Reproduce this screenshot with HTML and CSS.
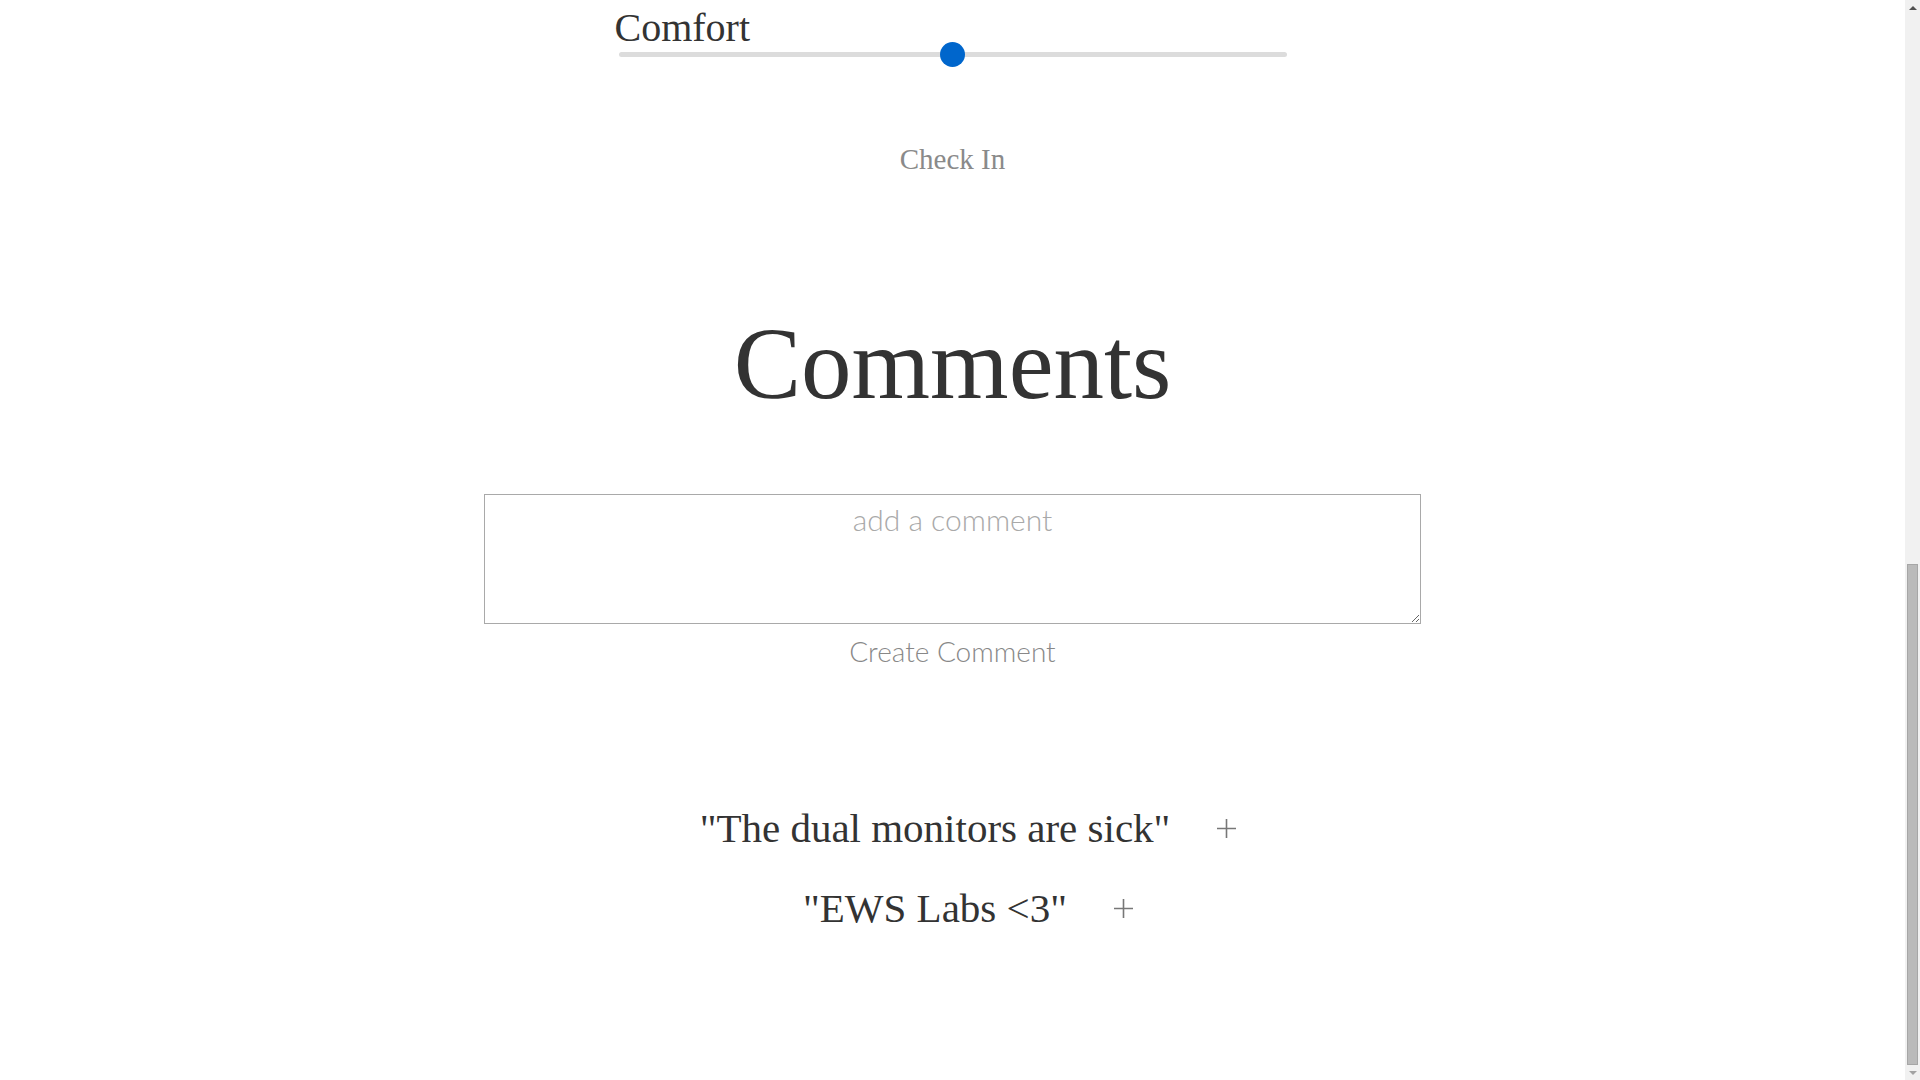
FILE: index.html
```html
<!DOCTYPE html>
<html lang="en">
<head>
<meta charset="utf-8">
<title>Check In</title>
<link rel="stylesheet" href="styles.css">
</head>
<body>
<main class="page">
  <section class="rating">
    <div class="field">
      <label class="field-label" for="comfort">Comfort</label>
      <input class="range" type="range" id="comfort" min="0" max="100" value="50">
    </div>
    <button class="check-in" type="button">Check In</button>
  </section>
  <section class="comments">
    <h1 class="comments-title">Comments</h1>
    <form class="comment-form">
      <textarea class="comment-input" placeholder="add a comment"></textarea>
      <button class="create-button" type="button">Create Comment</button>
    </form>
    <ul class="comment-list">
      <li class="comment">
        <span class="comment-text">"The dual monitors are sick"</span>
        <button class="plus-button" type="button" aria-label="upvote">
          <svg viewBox="0 0 19 19" width="19" height="19"><path d="M9.5 0V19M0 9.5H19" stroke="#777" stroke-width="1.6" fill="none"/></svg>
        </button>
      </li>
      <li class="comment">
        <span class="comment-text">"EWS Labs &lt;3"</span>
        <button class="plus-button" type="button" aria-label="upvote">
          <svg viewBox="0 0 19 19" width="19" height="19"><path d="M9.5 0V19M0 9.5H19" stroke="#777" stroke-width="1.6" fill="none"/></svg>
        </button>
      </li>
    </ul>
  </section>
</main>
<div class="scrollbar" aria-hidden="true">
  <span class="sb-arrow"><span class="sb-up"></span></span>
  <div class="sb-track"><div class="sb-thumb"></div></div>
  <span class="sb-arrow"><span class="sb-down"></span></span>
</div>
</body>
</html>
```
FILE: styles.css
```css
html, body {
  height: 100%;
}

body {
  margin: 0;
  display: flex;
  overflow: hidden;
  background: #fff;
  color: #333;
  font-family: "Liberation Serif", "Times New Roman", serif;
}

.page {
  flex: 1;
  min-width: 0;
  padding-top: 8px;
}

/* emulated browser scrollbar (page is scrolled to the bottom) */
.scrollbar {
  flex: none;
  width: 15px;
  height: 100vh;
  background: #f1f1f1;
  display: flex;
  flex-direction: column;
}

.sb-arrow {
  flex: none;
  height: 15px;
  display: flex;
  align-items: center;
  justify-content: center;
}

.sb-up {
  width: 0;
  height: 0;
  border-left: 4px solid transparent;
  border-right: 4px solid transparent;
  border-bottom: 4px solid #505050;
}

.sb-down {
  width: 0;
  height: 0;
  border-left: 4px solid transparent;
  border-right: 4px solid transparent;
  border-top: 4px solid #a3a3a3;
}

.sb-track {
  flex: 1;
  display: flex;
  flex-direction: column;
  justify-content: flex-end;
  padding: 0 2px;
}

.sb-thumb {
  box-sizing: border-box;
  height: 501px;
  background: #bababa;
  border: 1px solid #a6a6a6;
}

.field {
  width: 676px;
  margin: 0 auto;
  display: flex;
  flex-direction: column;
}

.field-label {
  font-size: 40px;
  line-height: 40px;
}

.range {
  -webkit-appearance: none;
  appearance: none;
  width: calc(100% - 8px);
  height: 25px;
  margin: -6px 4px 0;
  padding: 0;
  background: transparent;
}

.range::-webkit-slider-runnable-track {
  height: 5px;
  background: #dcdcdc;
  border-radius: 3px;
}

.range::-webkit-slider-thumb {
  -webkit-appearance: none;
  appearance: none;
  width: 25px;
  height: 25px;
  margin-top: -10px;
  border: none;
  border-radius: 50%;
  background: #0066cc;
}

.check-in {
  display: block;
  margin: 75px auto 0;
  padding: 0;
  border: 0;
  background: none;
  color: #8a8a8a;
  font-family: "Liberation Serif", serif;
  font-size: 29px;
  line-height: 34px;
}

.comments-title {
  margin: 131px 0 0;
  text-align: center;
  font-size: 101px;
  line-height: 115px;
  font-weight: normal;
  color: #333;
}

.comment-form {
  margin-top: 72px;
}

.comment-input {
  display: block;
  box-sizing: border-box;
  width: 937px;
  height: 130px;
  margin: 0 auto;
  padding: 6px 2px;
  border: 1px solid #a9a9a9;
  font-family: "Lato", "Open Sans", sans-serif;
  font-weight: 300;
  font-size: 30px;
  line-height: 36px;
  text-align: center;
  color: #333;
}

.comment-input::placeholder {
  color: #a9a9a9;
}

.create-button {
  display: block;
  margin: 10px auto 0;
  padding: 0;
  border: 0;
  background: none;
  color: #888;
  font-family: "Lato", "Open Sans", sans-serif;
  font-weight: 300;
  font-size: 28px;
  line-height: 34px;
}

.comment-list {
  margin: 120px 0 0;
  padding: 0;
  list-style: none;
}

.comment {
  display: flex;
  justify-content: center;
  align-items: center;
  padding-left: 31px;
  font-size: 41px;
  line-height: 80px;
  color: #333;
}

.plus-button {
  flex: none;
  display: flex;
  width: 19px;
  height: 19px;
  margin-left: 47px;
  padding: 0;
  border: 0;
  background: none;
}
```
